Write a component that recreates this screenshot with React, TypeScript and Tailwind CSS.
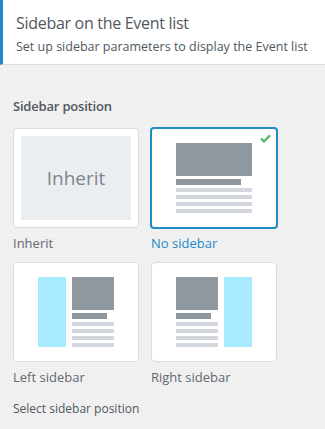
import React from "react";

const Lines = ({ w }: { w: string }) => (
  <div className="flex flex-col gap-[3px] mt-[3px]">
    <div className={`h-[4px] bg-[#d1d7dc] ${w}`} />
    <div className={`h-[4px] bg-[#d1d7dc] ${w}`} />
    <div className={`h-[4px] bg-[#d1d7dc] ${w}`} />
    <div className={`h-[4px] bg-[#d1d7dc] ${w}`} />
  </div>
);

const Content = ({ w, bar }: { w: string; bar: string }) => (
  <div className="flex flex-col">
    <div className={`h-[33px] bg-[#8f979f] ${w}`} />
    <div className={`h-[6px] bg-[#8f979f] mt-[3px] ${bar}`} />
    <Lines w={w} />
  </div>
);

export default function App() {
  return (
    <div
      className="w-[325px] h-[429px] bg-[#f0f0f0] overflow-hidden"
      style={{ fontFamily: '"Open Sans", "Noto Sans", sans-serif' }}
    >
      <div className="bg-white border-l-[3px] border-[#2189c4] border-b border-b-[#dcdcde] h-[65px] pl-[13px] pt-[12px]">
        <div className="text-[16px] leading-[22px] text-[#50575e] tracking-[-0.3px]">Sidebar on the Event list</div>
        <div className="text-[12.5px] leading-[18px] text-[#50575e] mt-[4px]">
          Set up sidebar parameters to display the Event list
        </div>
      </div>
      <div className="px-[13px] pt-[32px]">
        <div className="text-[13px] font-semibold text-[#50575e] leading-[18px] tracking-[-0.2px]">Sidebar position</div>
        <div className="grid grid-cols-[126px_126px] gap-x-[12px] mt-[13px]">
          <div className="flex flex-col">
            <div className="h-[100px] bg-white border border-[#dcdcde] rounded-[4px] p-[7px]">
              <div className="w-full h-full bg-[#ebeef1] flex items-center justify-center text-[19px] text-[#80858a]">
                Inherit
              </div>
            </div>
            <div className="text-[13px] text-[#646970] mt-[6px] leading-[18px]">Inherit</div>
          </div>
          <div className="flex flex-col">
            <div className="relative -mx-[1px] -mt-[1px] h-[102px] bg-white border-2 border-[#2189c4] rounded-[4px] flex items-center justify-center">
              <Content w="w-[76px]" bar="w-[65px]" />
              <svg className="absolute right-[5px] top-[5px]" width="11" height="9" viewBox="0 0 11 9">
                <path d="M1 4.5 L4 7.5 L10 1.2" fill="none" stroke="#4ab866" strokeWidth="2.2" />
              </svg>
            </div>
            <div className="text-[13px] text-[#2189c4] mt-[5px] leading-[18px]">No sidebar</div>
          </div>
          <div className="flex flex-col mt-[10px]">
            <div className="h-[100px] bg-white border border-[#dcdcde] rounded-[4px] flex items-center justify-center">
              <div className="flex gap-[6px]">
                <div className="w-[28px] h-[70px] bg-[#a8ebfe]" />
                <Content w="w-[42px]" bar="w-[35px]" />
              </div>
            </div>
            <div className="text-[13px] text-[#646970] mt-[6px] leading-[18px]">Left sidebar</div>
          </div>
          <div className="flex flex-col mt-[10px]">
            <div className="h-[100px] bg-white border border-[#dcdcde] rounded-[4px] flex items-center justify-center">
              <div className="flex gap-[6px]">
                <Content w="w-[42px]" bar="w-[35px]" />
                <div className="w-[28px] h-[70px] bg-[#a8ebfe]" />
              </div>
            </div>
            <div className="text-[13px] text-[#646970] mt-[6px] leading-[18px]">Right sidebar</div>
          </div>
        </div>
        <div className="text-[12px] text-[#50575e] mt-[15px] leading-[16px]">Select sidebar position</div>
      </div>
    </div>
  );
}
